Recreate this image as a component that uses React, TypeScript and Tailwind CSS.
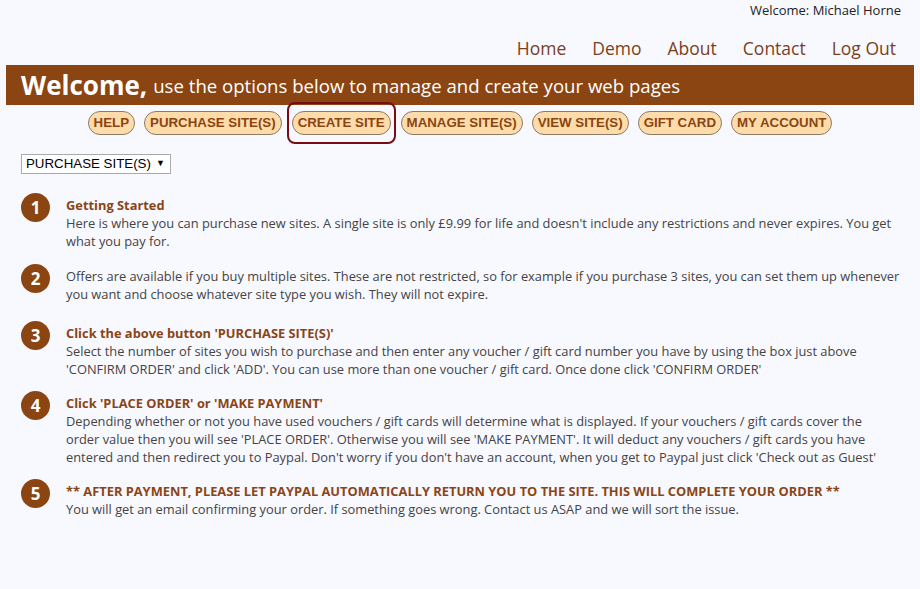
import React from "react";

const body = { fontFamily: '"Open Sans", "Noto Sans", sans-serif' };
const arial = { fontFamily: '"Liberation Sans", Arial, sans-serif' };

const buttons = ["HELP", "PURCHASE SITE(S)", "CREATE SITE", "MANAGE SITE(S)", "VIEW SITE(S)", "GIFT CARD", "MY ACCOUNT"];

function Step({ n, title, children, className = "" }: { n: number; title?: React.ReactNode; children: React.ReactNode; className?: string }) {
  return (
    <div className={"flex items-start " + className}>
      <div className="w-[29px] h-[29px] rounded-full bg-[#8b4513] text-white font-bold text-[17px] flex items-center justify-center shrink-0 mt-[-3px]">
        {n}
      </div>
      <div className="ml-[16px] text-[12.85px] leading-[18px] text-[#444] pr-[16px]">
        {title && <div className="font-bold text-[#8b4513]">{title}</div>}
        <div>{children}</div>
      </div>
    </div>
  );
}

const btn = "h-[24px] px-[5px] rounded-full bg-[#fedcaa] border border-[#8a7a6a] text-[#8b4513] font-bold text-[13.3px] flex items-center whitespace-nowrap";

export default function App() {
  return (
    <div className="min-h-[589px] w-[920px] bg-[#f8f8ff]" style={body}>
      <div className="text-right text-[13px] leading-[18px] text-[#222] pr-[19px] pt-[1px]">Welcome: Michael Horne</div>
      <nav className="flex justify-end gap-[26px] pr-[24px] mt-[17px] text-[17.5px] font-[500] leading-[24px] text-[#7b3f1a]">
        <span>Home</span>
        <span>Demo</span>
        <span>About</span>
        <span>Contact</span>
        <span>Log Out</span>
      </nav>
      <div className="mx-[6px] mt-[5px] h-[40px] bg-[#8b4513] text-white flex items-center pl-[15px]">
        <span className="font-bold text-[26px] leading-none">Welcome,</span>
        <span className="text-[18.6px] ml-[6px] leading-none mt-[3px]">use the options below to manage and create your web pages</span>
      </div>
      <div className="flex justify-center items-center gap-[9px] mt-[6px] h-[24px]" style={arial}>
        {buttons.map((b) =>
          b === "CREATE SITE" ? (
            <div key={b} className="rounded-[8px] border-2 border-[#7a0a14] px-[3px] py-[7px] -my-[8px] -mx-[4px]">
              <div className={btn}>{b}</div>
            </div>
          ) : (
            <div key={b} className={btn}>{b}</div>
          )
        )}
      </div>
      <div className="ml-[21px] mt-[19px] w-[150px] h-[20px] border border-[#aaa] bg-white text-[13.3px] text-black flex items-center px-[4px] whitespace-nowrap" style={arial}>
        PURCHASE SITE(S)<span className="ml-[5px] text-[9px]">▼</span>
      </div>
      <div className="pl-[21px] mt-[22px]">
        <Step n={1} title="Getting Started">
          Here is where you can purchase new sites. A single site is only £9.99 for life and doesn't include any restrictions and never expires. You get what you pay for.
        </Step>
        <Step n={2} className="mt-[17px]">
          Offers are available if you buy multiple sites. These are not restricted, so for example if you purchase 3 sites, you can set them up whenever you want and choose whatever site type you wish. They will not expire.
        </Step>
        <Step n={3} title="Click the above button 'PURCHASE SITE(S)'" className="mt-[21px]">
          Select the number of sites you wish to purchase and then enter any voucher / gift card number you have by using the box just above 'CONFIRM ORDER' and click 'ADD'. You can use more than one voucher / gift card. Once done click 'CONFIRM ORDER'
        </Step>
        <Step n={4} title="Click 'PLACE ORDER' or 'MAKE PAYMENT'" className="mt-[16px]">
          Depending whether or not you have used vouchers / gift cards will determine what is displayed. If your vouchers / gift cards cover the
          <br />
          order value then you will see 'PLACE ORDER'. Otherwise you will see 'MAKE PAYMENT'. It will deduct any vouchers / gift cards you have entered and then redirect you to Paypal. Don't worry if you don't have an account, when you get to Paypal just click 'Check out as Guest'
        </Step>
        <Step n={5} title="** AFTER PAYMENT, PLEASE LET PAYPAL AUTOMATICALLY RETURN YOU TO THE SITE. THIS WILL COMPLETE YOUR ORDER **" className="mt-[16px]">
          You will get an email confirming your order. If something goes wrong. Contact us ASAP and we will sort the issue.
        </Step>
      </div>
    </div>
  );
}
